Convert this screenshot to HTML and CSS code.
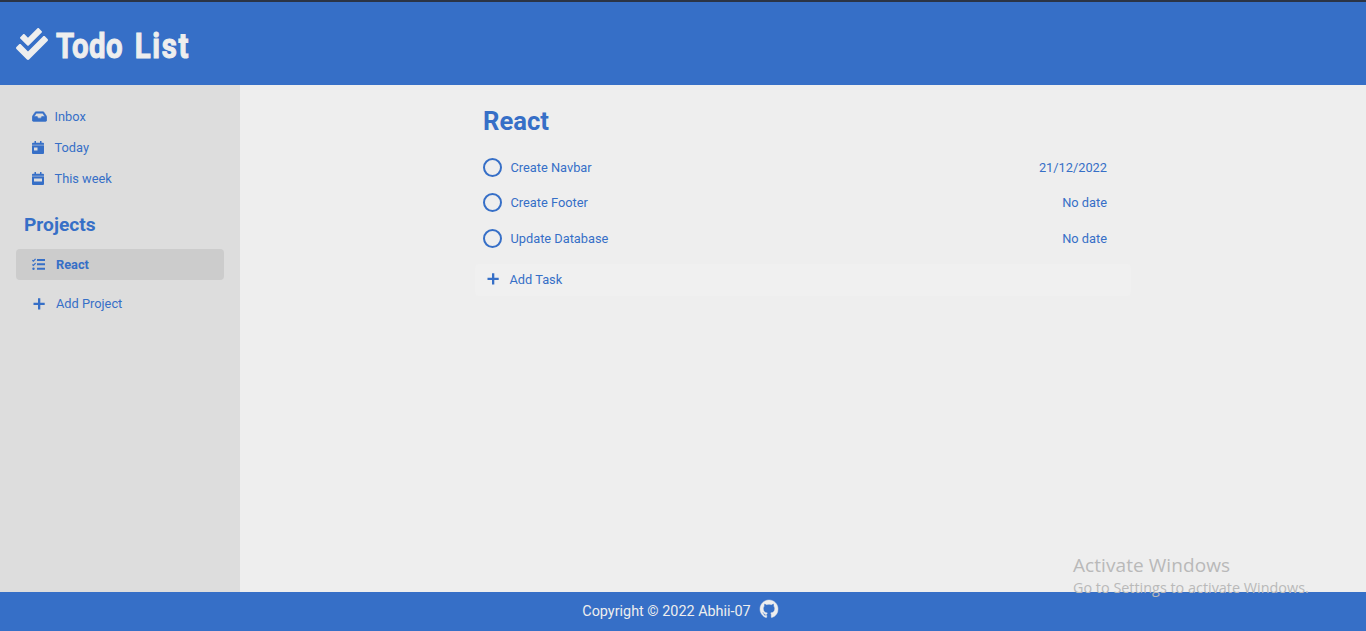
FILE: index.html
```html
<!DOCTYPE html>
<html lang="en">
<head>
<meta charset="utf-8">
<title>Todo List</title>
<link rel="stylesheet" href="styles.css">
</head>
<body>
<header class="header">
  <svg class="logo" viewBox="0 0 512 512"><path d="M505 174.8l-39.6-39.6c-9.4-9.4-24.6-9.4-33.9 0L192 374.7 80.6 263.2c-9.4-9.4-24.6-9.4-33.9 0L7 302.9c-9.4 9.4-9.4 24.6 0 34L175 505c9.4 9.4 24.6 9.4 33.9 0l296-296.2c9.4-9.5 9.4-24.7.1-34zm-324.3 106c6.2 6.3 16.4 6.3 22.6 0l208-208.2c6.2-6.3 6.2-16.4 0-22.6L366.1 4.7c-6.2-6.3-16.4-6.3-22.6 0L192 156.2l-55.4-55.5c-6.2-6.3-16.4-6.3-22.6 0L68.7 146c-6.2 6.3-6.2 16.4 0 22.6l112 112.2z"/></svg>
  <h1 class="brand">Todo <span class="brand-end">List</span></h1>
</header>
<div class="body">
  <nav class="sidebar">
    <div class="nav-item"><svg class="ico inbox" viewBox="0 0 576 512"><path d="M567.938 243.908L462.25 85.374A48.003 48.003 0 0 0 422.311 64H153.689a48 48 0 0 0-39.938 21.374L8.062 243.908A47.994 47.994 0 0 0 0 270.533V400c0 26.51 21.49 48 48 48h480c26.51 0 48-21.49 48-48V270.533a47.994 47.994 0 0 0-8.062-26.625zM162.252 128h251.497l85.333 128H376l-32 64H232l-32-64H76.918l85.334-128z"/></svg><span>Inbox</span></div>
    <div class="nav-item"><svg class="ico cal" viewBox="0 0 12 13"><path d="M0 4.500h12V12a1 1 0 0 1-1 1H1a1 1 0 0 1-1-1zM2 6.500v3h3.500v-3zM1 1.700h1.500V0H4v1.700h4V0h1.500v1.700H11a1 1 0 0 1 1 1v1H0v-1a1 1 0 0 1 1-1z" fill-rule="evenodd"/><path class="band" d="M0 3.600h12v1H0z"/></svg><span>Today</span></div>
    <div class="nav-item"><svg class="ico cal" viewBox="0 0 12 13"><path d="M0 4.500h12V12a1 1 0 0 1-1 1H1a1 1 0 0 1-1-1zM2 6.500v3h8v-3zM1 1.700h1.500V0H4v1.700h4V0h1.500v1.700H11a1 1 0 0 1 1 1v1H0v-1a1 1 0 0 1 1-1z" fill-rule="evenodd"/><path class="band" d="M0 3.600h12v1H0z"/></svg><span>This week</span></div>
    <h2 class="side-title">Projects</h2>
    <div class="project active"><svg class="ico tasks" viewBox="0 0 13 13"><path d="M5 1h8v2H5zM5 5.300h8v2H5zM5 9.700h8v2H5z"/><circle cx="1.500" cy="10.700" r="1.200"/><path class="tick" d="M.4 2.200l1 1L3.600.9M.4 6.500l1 1 2.200-2.300"/></svg><span>React</span></div>
    <div class="project add"><svg class="ico plus" viewBox="0 0 12 12"><path d="M5 .3h2.300v4.400h4.400V7H7.300v4.400H5V7H.5V4.700H5z"/></svg><span>Add Project</span></div>
  </nav>
  <main class="main">
    <section class="list">
      <h2 class="list-title">React</h2>
      <div class="task"><i class="circle"></i><span>Create Navbar</span><span class="date">21/12/2022</span></div>
      <div class="task"><i class="circle"></i><span>Create Footer</span><span class="date">No date</span></div>
      <div class="task last"><i class="circle"></i><span>Update Database</span><span class="date">No date</span></div>
      <div class="add-task"><svg class="ico plus" viewBox="0 0 12 12"><path d="M5 .3h2.300v4.400h4.400V7H7.300v4.400H5V7H.5V4.700H5z"/></svg><span>Add Task</span></div>
    </section>
  </main>
</div>
<footer class="footer"><span>Copyright © 2022 Abhii-07</span><svg class="github" viewBox="0 0 16 16"><path d="M8 0C3.580 0 0 3.580 0 8c0 3.540 2.290 6.530 5.470 7.590.4.070.55-.17.55-.38 0-.19-.01-.82-.01-1.490-2.010.37-2.530-.49-2.690-.94-.09-.23-.48-.94-.82-1.130-.28-.15-.68-.52-.01-.53.63-.01 1.080.58 1.230.82.72 1.210 1.870.87 2.330.66.07-.52.28-.87.51-1.070-1.780-.2-3.640-.89-3.640-3.950 0-.87.31-1.590.82-2.150-.08-.2-.36-1.020.08-2.120 0 0 .67-.21 2.200.82.64-.18 1.320-.27 2-.27s1.360.09 2 .27c1.530-1.040 2.200-.82 2.200-.82.44 1.100.16 1.920.08 2.120.51.56.82 1.270.82 2.150 0 3.070-1.870 3.750-3.650 3.950.29.25.54.73.54 1.480 0 1.070-.01 1.930-.01 2.200 0 .21.15.46.55.38A8.010 8.010 0 0 0 16 8c0-4.420-3.580-8-8-8z"/></svg></footer>
<div class="watermark"><div class="wm-title">Activate Windows</div><div class="wm-text">Go to Settings to activate Windows.</div></div>
</body>
</html>
```
FILE: styles.css
```css
* { box-sizing: border-box; }
body {
  margin: 0;
  height: 631px;
  overflow: hidden;
  display: flex;
  flex-direction: column;
  font-family: Roboto, "Liberation Sans", sans-serif;
  font-size: 12.8px;
  color: #366fc7;
  background: #eee;
}
svg { fill: currentColor; flex: none; }
.header {
  height: 85px;
  border-top: 2px solid #2b3445;
  background: #366fc7;
  color: #eee;
  display: flex;
  align-items: center;
  gap: 8px;
  padding: 0 16px;
}
.logo { width: 32px; height: 32px; }
.brand {
  margin: 6px 0 0;
  font-size: 35px;
  line-height: 40px;
  font-weight: 700;
  white-space: nowrap;
  word-spacing: 5px;
  letter-spacing: .4px;
  -webkit-text-stroke: 1px #eee;
  transform: scaleX(.84);
  transform-origin: left;
}
.brand-end { letter-spacing: 2px; }
.body { flex: 1; display: flex; }
.sidebar { width: 240px; background: #ddd; padding: 16px; }
.nav-item { height: 31px; padding-left: 16px; display: flex; align-items: center; }
.inbox { width: 15px; height: 13px; margin-right: 7.5px; stroke: currentColor; stroke-width: 20px; }
.cal { width: 12px; height: 13px; margin-right: 10.5px; }
.band { opacity: .5; }
.side-title { margin: 20px 0 13px 8px; font-size: 19.2px; line-height: 22px; height: 22px; }
.project { height: 31px; border-radius: 4px; padding-left: 16px; display: flex; align-items: center; }
.active { background: #ccc; font-weight: 700; margin-top: 13px; }
.add { margin-top: 8px; }
.tasks { width: 13px; height: 13px; margin-right: 11px; }
.tick { fill: none; stroke: currentColor; stroke-width: 1.2; }
.plus { width: 12px; height: 12px; margin: 0 11px 0 1px; }
.main { flex: 1; display: flex; justify-content: center; }
.list { width: 656px; padding-top: 20px; }
.list-title { margin: 0 0 13px 8px; font-size: 25.6px; line-height: 32px; }
.task { height: 35px; padding: 0 24px 0 8px; display: flex; align-items: center; }
.last { height: 36px; }
.circle { width: 19px; height: 19px; border: 2px solid; border-radius: 50%; margin-right: 8.5px; }
.date { margin-left: auto; }
.add-task { height: 32px; margin-top: 8px; padding: 0 0 2px 11px; display: flex; align-items: center; background: #f0f0f0; border-radius: 4px; }
.add-task .plus { margin-right: 10.5px; }
.footer { height: 39px; background: #366fc7; color: #eee; display: flex; align-items: center; justify-content: center; gap: 9px; font-size: 14.4px; padding: 0 6px 0 0; }
.github { width: 18px; height: 18px; margin-top: -5px; overflow: visible; stroke: currentColor; stroke-width: .4px; }
.watermark { position: absolute; left: 1073px; top: 552px; color: #b9b9b9; font-family: "Open Sans", "Noto Sans", sans-serif; white-space: nowrap; }
.wm-title { font-size: 19px; line-height: 26px; letter-spacing: .07px; }
.wm-text { font-size: 14.4px; line-height: 20px; height: 21px; overflow: hidden; }
```
